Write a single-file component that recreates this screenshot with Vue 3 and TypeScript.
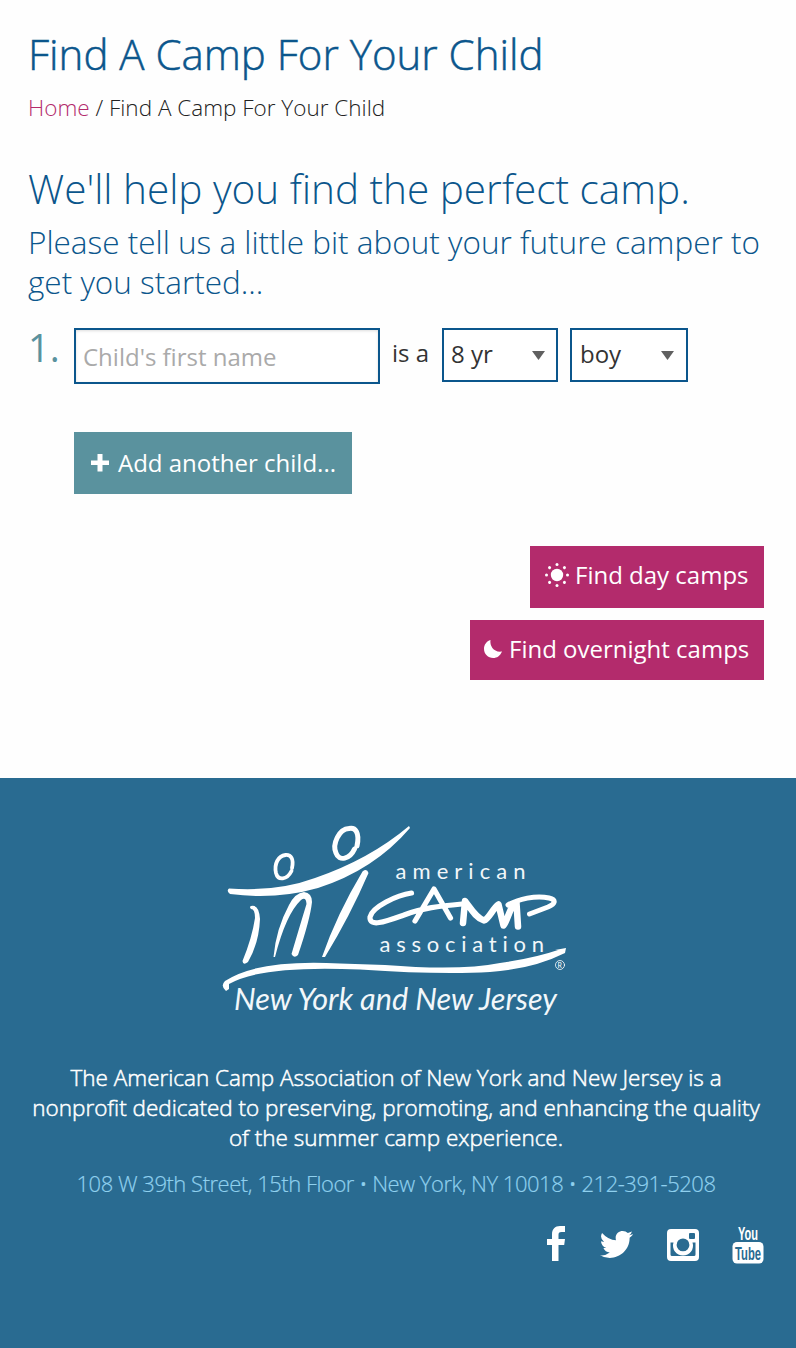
<script setup lang="ts">
import { ref } from 'vue'

const childName = ref('')
const age = ref('8 yr')
const gender = ref('boy')
const sunDots = [0, 45, 90, 135, 180, 225, 270, 315]
</script>

<template>
  <div class="page">
    <main class="main">
      <h1 class="title"><span>Find A Camp For Your Child</span></h1>
      <nav class="crumbs"><a>Home</a> / Find A Camp For Your Child</nav>
      <h2 class="headline">We'll help you find the perfect camp.</h2>
      <p class="intro">Please tell us a little bit about your future camper to<br />get you started...</p>

      <div class="child">
        <span class="num">1.</span>
        <input v-model="childName" class="name" placeholder="Child's first name" />
        <span class="isa">is a</span>
        <div class="select age">{{ age }}<svg width="13" height="9" viewBox="0 0 13 9"><path d="M0 0H13L6.5 9Z" fill="#606060" /></svg></div>
        <div class="select gender">{{ gender }}<svg width="13" height="9" viewBox="0 0 13 9"><path d="M0 0H13L6.5 9Z" fill="#606060" /></svg></div>
      </div>

      <button class="btn add">
        <svg width="18" height="18" viewBox="0 0 18 18"><path d="M6.500 0H11.500V6.500H18V11H11.500V17.500H6.500V11H0V6.500H6.500Z" fill="#fff" /></svg>
        <span>Add another child...</span>
      </button>

      <div class="actions">
        <button class="btn find day">
          <svg width="24" height="24" viewBox="-12 -12 24 24" fill="#fff">
            <circle r="6.200" />
            <circle v-for="a in sunDots" :key="a" r="1.500" cx="10.500" :transform="`rotate(${a})`" />
          </svg>
          <span>Find day camps</span>
        </button>
        <button class="btn find night">
          <svg width="18" height="18" viewBox="0 0 18 18"><path d="M6.500 0C5.500 6 10 12.800 18 11.500C16 16 13 18 9.200 18C4 18 0 14 0 8.800C0 4.800 2.500 1.300 6.500 0Z" fill="#fff" /></svg>
          <span>Find overnight camps</span>
        </button>
      </div>
    </main>

    <footer class="footer">
      <svg class="logo" width="360" height="210" viewBox="215 815 360 210" fill="none" stroke="#fff" stroke-linecap="round" stroke-linejoin="round">
        <path fill="#fff" stroke="none" d="M229 888.500Q277 892 315 878Q370 859 409 826L410 828Q374 870 318 888Q276 900 230 894Q226 891 229 888.500Z" />
        <path stroke-width="3.800" d="M292 868C294 859 291 854.500 285.500 855C278 856 274 864 276 873C278 881 287 880 291.500 871" />
        <path stroke-width="5" d="M357 846C360 832 355 827 349 828.500C339 829 332 844 336 853C339 862 350 859 354.500 849" />
        <path fill="#fff" stroke="none" d="M251 909Q249 907 251 906Q259 904 260 919Q259 943 248 962Q243 966 242.500 961Q252 938 255 918Q255 909 251 909ZM273.500 957Q276 929 289 905Q295 893 304 892Q312 893 312 902Q310 920 298 955Q294 959 291.500 954Q301 922 306.500 904Q306 896 301 900Q286 914 275 957ZM362.500 871.500Q367 868 368.500 873Q350 916 325 957L322 957Q337 914 362.500 871.500Z" />
        <path stroke-width="5.200" d="M411.500 893C397 895 372 907 370 917C369 928 387 921 404 915C422 908 440 906 462 904M415 921L434 889L450.500 918" />
        <path stroke-width="6.500" d="M463 923L465 901C471 909 476 918 484 920.500C489 919 493 908 498.500 904.500L503.500 925.500C508 920 510 905 516.500 903L518 926.500" />
        <path stroke-width="5" d="M508 905C518 899 536 895 549 898C557 900 555 904 548 907L529.500 914" />
        <path fill="#fff" stroke="none" d="M229 989L226 991Q220 986 225 981Q258 959 340 963.500L385 965Q460 971 500 963Q535 958 558 950L555 950L566 948L565 953Q533 969 490 972Q440 975 360 969.500Q262 965 229 984Z" />
        <g fill="#f2f7fa" stroke="none" class="logo-text">
          <text x="395.500" y="879" font-size="22" textLength="130">american</text>
          <text x="379.500" y="951.500" font-size="22" textLength="164.500">association</text>
          <text class="state" x="234" y="1010" font-size="31" textLength="323" lengthAdjust="spacingAndGlyphs">New York and New Jersey</text>
        </g>
        <circle cx="560" cy="965" r="4.500" stroke-width="1" opacity=".8" />
        <text x="557.500" y="967.500" font-size="7" fill="#fff" stroke="none" class="logo-text">R</text>
      </svg>
      <p class="about">The American Camp Association of New York and New Jersey is a<br />nonprofit dedicated to preserving, promoting, and enhancing the quality<br />of the summer camp experience.</p>
      <p class="address">108 W 39th Street, 15th Floor • New York, NY 10018 • 212-391-5208</p>
      <div class="social">
        <svg class="fb" width="18" height="36" viewBox="0 0 18 36"><path fill="#fff" d="M18 0V6H14.500C12 6 11.500 7.200 11.500 9V13H18L17.200 19H11.500V35H5V19H0V13H5V8.500C5 3 8 0 13 0Z" /></svg>
        <svg class="tw" width="33" height="28" viewBox="0 0 32 28" preserveAspectRatio="none"><path fill="#fff" d="M32 3.500Q30.500 5.500 28.700 6.800C29 18 20 27 9.500 27Q4 27 0 24.300Q5 25 9.500 21.500Q5 21 3.300 17H6.200Q1 15 1 10.200L4 11Q-.7 7 2 2Q8 9 15.500 9.200C14 3.500 18 0 22 0Q25 0 27 2L31 .5Q30.300 3 28.200 4.300L32 3.300Z" /></svg>
        <svg class="ig" width="32" height="32" viewBox="0 0 32 32"><path fill="#fff" fill-rule="evenodd" d="M4 0H28Q32 0 32 4V28Q32 32 28 32H4Q0 32 0 28V4Q0 0 4 0ZM23 4Q22 4 22 5V9Q22 10 23 10H27Q28 10 28 9V5Q28 4 27 4ZM3.500 13.500V25.500Q3.500 27 5 27H27Q28.500 27 28.500 25.500V13.500H25.500A10 10 0 1 1 6.500 13.500ZM16 9.500A6.400 6.400 0 1 0 16 22.300A6.400 6.400 0 1 0 16 9.500Z" /></svg>
        <svg class="yt" width="32" height="40" viewBox="0 0 32 40">
          <text x="6" y="14" font-size="19" textLength="20" lengthAdjust="spacingAndGlyphs" fill="#fff">You</text>
          <rect x="0.500" y="16" width="31" height="21.500" rx="4.500" fill="#fff" />
          <text x="3" y="33.500" font-size="19" textLength="26" lengthAdjust="spacingAndGlyphs" fill="#296b91">Tube</text>
        </svg>
      </div>
    </footer>
  </div>
</template>

<style>
body { margin: 0; background: #fefefe; }
</style>

<style scoped>
.page { width: 796px; height: 1348px; display: flex; flex-direction: column; font-family: "Open Sans", sans-serif; color: #333; overflow: hidden; }
.page * { box-sizing: border-box; }
.main { height: 778px; padding: 23px 32px 0 28px; flex: none; }
h1, h2, p { margin: 0; font-weight: 300; color: #0b568c; white-space: nowrap; }
.title { font-size: 42px; line-height: 62px; -webkit-text-stroke: 0.500px #0b568c; }
.crumbs { font-size: 22.500px; line-height: 30px; margin-top: 8px; font-weight: 300; color: #222; white-space: nowrap; }
.crumbs a { color: #b32b6c; }
.headline { font-size: 40.500px; line-height: 60px; margin-top: 36px; }
.intro { font-size: 31.500px; line-height: 40px; margin-top: 3px; }
.child { display: flex; align-items: flex-start; margin-top: 26px; height: 56px; font-size: 24px; }
.num { width: 46px; font-size: 38px; line-height: 39px; color: #5a929e; }
.name { width: 306px; height: 56px; border: 2px solid #0b568c; border-radius: 0; padding: 0 7px; font: 24px "Open Sans", sans-serif; background: #fff; outline: none; box-shadow: inset 0 1px 3px #ddd; }
.name::placeholder { color: #aaa; }
.isa { width: 62px; padding-left: 12px; line-height: 50px; }
.select { height: 54px; border: 2px solid #0b568c; display: flex; justify-content: space-between; align-items: center; padding: 0 11px 4px 7px; background: #fff; }
.select svg { margin-top: 4px; }
.age { width: 116px; margin-right: 12px; }
.gender { width: 118px; padding-left: 8px; padding-right: 12px; }
.btn { border: 0; display: flex; align-items: center; color: #fff; font: 24px "Open Sans", sans-serif; padding: 0; white-space: nowrap; }
.btn span { margin-bottom: 2px; }
.add { width: 278px; height: 62px; margin: 48px 0 0 46px; background: #5a929e; padding-left: 17px; gap: 9px; }
.actions { margin-top: 52px; display: flex; flex-direction: column; align-items: flex-end; gap: 12px; }
.find { background: #b32b6c; padding-bottom: 2px; }
.day { width: 234px; height: 62px; padding-left: 15px; padding-bottom: 4px; gap: 6px; }
.night { width: 294px; height: 60px; padding-left: 14px; gap: 7px; }
.footer { background: #296b91; height: 570px; padding-top: 37px; display: flex; flex-direction: column; }
.logo { margin-left: 215px; flex: none; }
.logo-text { font-family: Lato, sans-serif; font-variant-ligatures: none; }
.state { font-style: italic; }
.about { margin-top: 38px; padding-right: 4px; text-align: center; color: #fff; font-size: 22.500px; line-height: 30px; -webkit-text-stroke: 0.500px #fff; }
.address { margin-top: 15px; padding-right: 4px; text-align: center; color: #8fd0ee; font-size: 22px; letter-spacing: -0.480px; line-height: 30px; -webkit-text-stroke: 0.200px #8fd0ee; }
.social { display: flex; align-items: flex-start; justify-content: flex-end; margin-top: 28px; padding-right: 32px; }
.tw { margin: 5px 0 0 35px; }
.ig { margin: 3px 0 0 34px; }
.yt { margin-left: 33px; overflow: visible; }
.yt text { font-family: "Liberation Sans", sans-serif; font-weight: bold; }
</style>
